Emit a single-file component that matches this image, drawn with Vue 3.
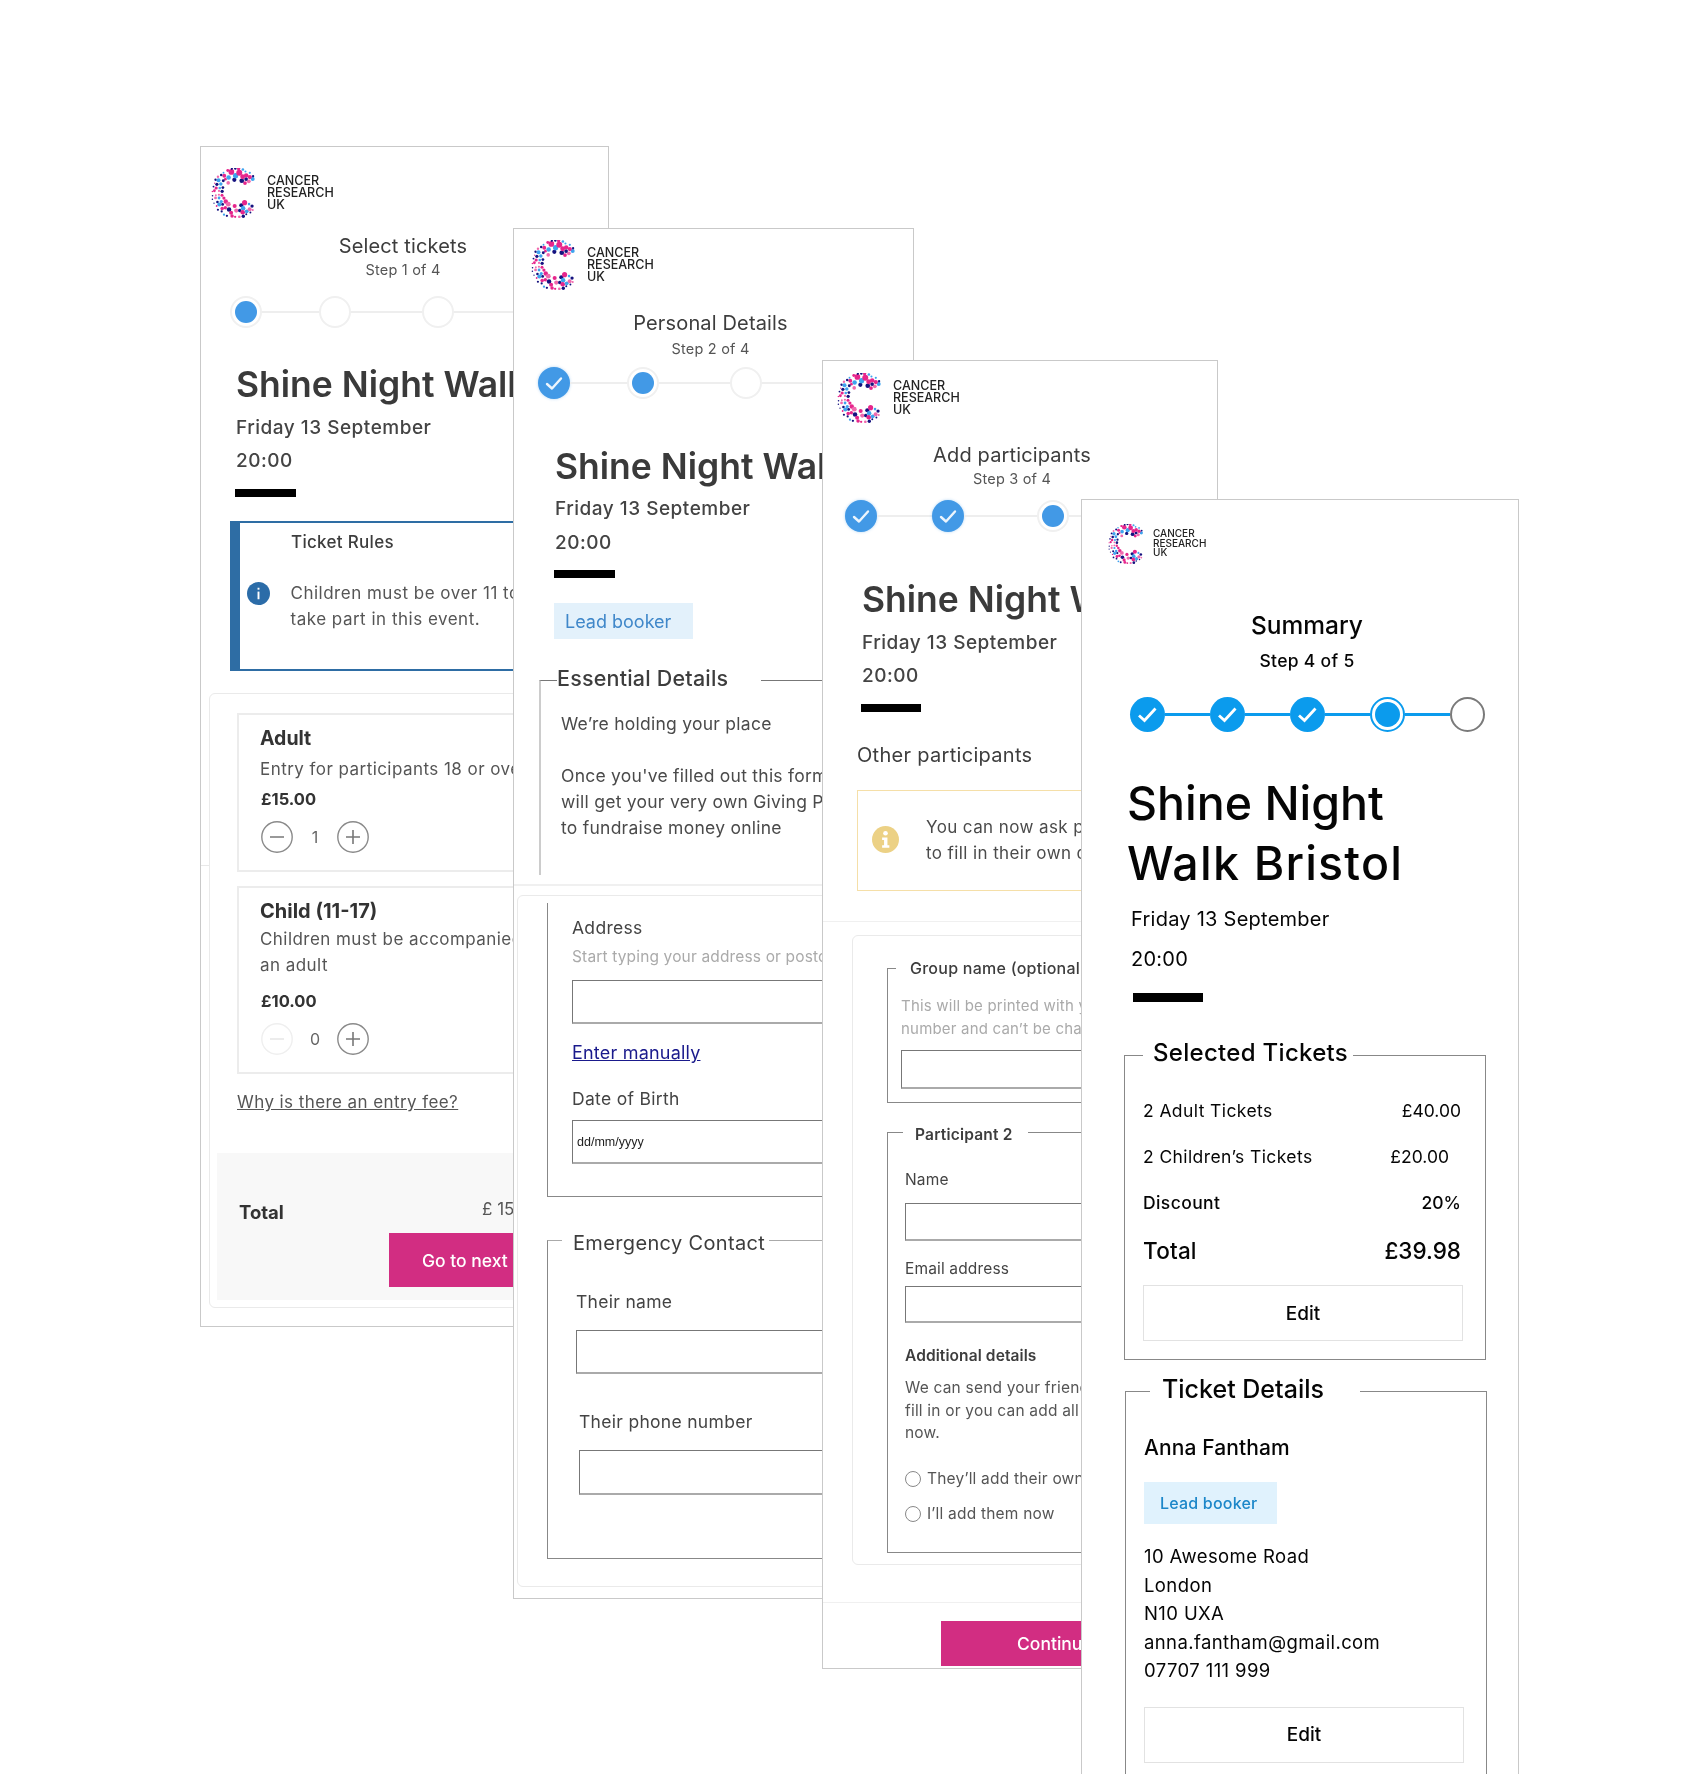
<script setup>
const palette = ['#e6268c', '#15127f', '#3fa3ee', '#f06aae', '#15127f', '#e6268c']
let seed = 11
const rnd = () => (seed = (seed * 16807) % 2147483647) / 2147483647
const dots = []
const rings = [
  { r: 27, n: 18, size: 4.8, from: 50, to: 310 },
  { r: 35, n: 24, size: 4.0, from: 42, to: 318 },
  { r: 42, n: 28, size: 4.6, from: 40, to: 320 },
  { r: 48, n: 30, size: 2.6, from: 46, to: 314 }
]
rings.forEach((ring, ri) => {
  for (let i = 0; i < ring.n; i++) {
    const deg = ring.from + ((ring.to - ring.from) * i) / (ring.n - 1) + (rnd() - 0.5) * 4
    const a = (deg * Math.PI) / 180
    const rr = ring.r + (rnd() - 0.5) * 3
    const sinA = Math.abs(Math.sin(a))
    const size = ring.size * (0.55 + 0.55 * sinA * sinA) * (0.75 + rnd() * 0.5)
    let fill = palette[Math.floor(rnd() * palette.length)]
    if (ri === 0 && rnd() < 0.6) fill = '#15127f'
    if (ri === 2 && sinA > 0.8 && rnd() < 0.6) fill = '#e6268c'
    const x = +(50 + rr * Math.cos(a)).toFixed(1)
    const y = +(50 - rr * Math.sin(a)).toFixed(1)
    const r = +size.toFixed(1)
    // Dots may touch lightly but must not sit on top of each other.
    if (dots.every((d) => Math.hypot(d.x - x, d.y - y) > (d.r + r) * 0.8)) dots.push({ x, y, r, fill })
  }
})
const logoLines = ['CANCER', 'RESEARCH', 'UK']
const addressLines = ['10 Awesome Road', 'London', 'N10 UXA', 'anna.fantham@gmail.com', '07707 111 999']
</script>

<template>
  <div class="canvas">
    <!-- Screen 1 -->
    <section class="screen dim s1">
      <div class="s1-backline"></div>
      <div class="logo s1-logo">
        <svg class="mark" viewBox="0 0 100 100"><circle v-for="(d, i) in dots" :key="i" :cx="d.x" :cy="d.y" :r="d.r" :fill="d.fill" /></svg>
        <div class="wordmark"><span v-for="l in logoLines" :key="l">{{ l }}</span></div>
      </div>
      <div class="head s1-head">
        <h2 class="step-title">Select tickets</h2>
        <p class="step-sub s1-sub">Step 1 of 4</p>
      </div>
      <div class="stepper s1-stepper">
        <span class="node current"><i></i></span><span class="line w57"></span>
        <span class="node"></span><span class="line w71"></span>
        <span class="node"></span><span class="line w120"></span>
      </div>
      <h1 class="title s1-title">Shine Night Walk Bristol</h1>
      <p class="meta s1-date">Friday 13 September</p>
      <p class="meta s1-time">20:00</p>
      <div class="bar s1-bar"></div>
      <div class="rules">
        <p class="rules-head">Ticket Rules</p>
        <div class="rules-row">
          <svg class="info" viewBox="0 0 24 24"><circle cx="12" cy="12" r="12" fill="#2b6ca8" /><rect x="11" y="6" width="2" height="2" fill="#fff" /><rect x="11" y="10" width="2" height="8" fill="#fff" /></svg>
          <p class="rules-text">Children must be over 11 to<br />take part in this event.</p>
        </div>
      </div>
      <div class="card s1-card">
        <div class="ticket adult">
          <h3 class="t-name">Adult</h3>
          <p class="t-desc">Entry for participants 18 or over</p>
          <p class="t-price">£15.00</p>
          <div class="qty">
            <svg class="qbtn" viewBox="0 0 32 32"><circle cx="16" cy="16" r="15.2" /><path d="M9 16h14" /></svg>
            <span class="count">1</span>
            <svg class="qbtn" viewBox="0 0 32 32"><circle cx="16" cy="16" r="15.2" /><path d="M9 16h14M16 9v14" /></svg>
          </div>
        </div>
        <div class="ticket child">
          <h3 class="t-name big">Child (11-17)</h3>
          <p class="t-desc two">Children must be accompanied by<br />an adult</p>
          <p class="t-price p2">£10.00</p>
          <div class="qty">
            <svg class="qbtn off" viewBox="0 0 32 32"><circle cx="16" cy="16" r="15.2" /><path d="M9 16h14" /></svg>
            <span class="count">0</span>
            <svg class="qbtn" viewBox="0 0 32 32"><circle cx="16" cy="16" r="15.2" /><path d="M9 16h14M16 9v14" /></svg>
          </div>
        </div>
        <a class="why">Why is there an entry fee?</a>
        <div class="totals">
          <div class="totals-row"><span class="totals-label">Total</span><span class="totals-price">£ 15.00</span></div>
          <div class="btn-pink s1-btn">Go to next step</div>
        </div>
      </div>
    </section>

    <!-- Screen 2 -->
    <section class="screen dim s2">
      <div class="logo s2-logo">
        <svg class="mark" viewBox="0 0 100 100"><circle v-for="(d, i) in dots" :key="i" :cx="d.x" :cy="d.y" :r="d.r" :fill="d.fill" /></svg>
        <div class="wordmark"><span v-for="l in logoLines" :key="l">{{ l }}</span></div>
      </div>
      <div class="head s2-head">
        <h2 class="step-title">Personal Details</h2>
        <p class="step-sub s2-sub">Step 2 of 4</p>
      </div>
      <div class="stepper s2-stepper">
        <span class="node done"><svg viewBox="0 0 32 32"><path d="M9 17l5 4.5 9-10" /></svg></span><span class="line w57"></span>
        <span class="node current"><i></i></span><span class="line w71"></span>
        <span class="node"></span><span class="line w120"></span>
      </div>
      <h1 class="title s2-title">Shine Night Walk Bristol</h1>
      <p class="meta s2-date">Friday 13 September</p>
      <p class="meta s2-time">20:00</p>
      <div class="bar s2-bar"></div>
      <div class="chip s2-chip">Lead booker</div>
      <fieldset class="fs s2-essential">
        <legend>Essential Details</legend>
        <p class="body first">We’re holding your place</p>
        <p class="body second">Once you've filled out this form you<br />will get your very own Giving Page<br />to fundraise money online</p>
      </fieldset>
      <div class="divider s2-div"></div>
      <div class="card s2-card">
        <div class="s2-address">
          <label class="lab s2-l1">Address</label>
          <p class="hint s2-hint">Start typing your address or postcode</p>
          <div class="input s2-in1"></div>
          <a class="manual">Enter manually</a>
          <label class="lab s2-l2">Date of Birth</label>
          <div class="input s2-in2"><span class="dob">dd/mm/yyyy</span></div>
        </div>
        <fieldset class="fs s2-emergency">
          <legend>Emergency Contact</legend>
          <label class="lab s2-l3">Their name</label>
          <div class="input s2-in3"></div>
          <label class="lab s2-l4">Their phone number</label>
          <div class="input s2-in4"></div>
        </fieldset>
      </div>
    </section>

    <!-- Screen 3 -->
    <section class="screen dim s3">
      <div class="logo s3-logo">
        <svg class="mark" viewBox="0 0 100 100"><circle v-for="(d, i) in dots" :key="i" :cx="d.x" :cy="d.y" :r="d.r" :fill="d.fill" /></svg>
        <div class="wordmark"><span v-for="l in logoLines" :key="l">{{ l }}</span></div>
      </div>
      <div class="head s3-head">
        <h2 class="step-title">Add participants</h2>
        <p class="step-sub s3-sub">Step 3 of 4</p>
      </div>
      <div class="stepper s3-stepper">
        <span class="node done"><svg viewBox="0 0 32 32"><path d="M9 17l5 4.5 9-10" /></svg></span><span class="line w55"></span>
        <span class="node done"><svg viewBox="0 0 32 32"><path d="M9 17l5 4.5 9-10" /></svg></span><span class="line w73"></span>
        <span class="node current"><i></i></span><span class="line w120"></span>
      </div>
      <h1 class="title s3-title">Shine Night Walk Bristol</h1>
      <p class="meta s3-date">Friday 13 September</p>
      <p class="meta s3-time">20:00</p>
      <div class="bar s3-bar"></div>
      <h3 class="others">Other participants</h3>
      <div class="notice">
        <svg class="notice-ico" viewBox="0 0 28 28"><circle cx="14" cy="14" r="14" fill="#ecd185" /><circle cx="14" cy="7.5" r="2.4" fill="#fff" /><path d="M10.5 12h5.5v8h2v2.5h-7.5V20h2v-5.5h-2z" fill="#fff" /></svg>
        <p class="notice-text">You can now ask participants<br />to fill in their own details</p>
      </div>
      <div class="divider s3-div"></div>
      <div class="card s3-card">
        <fieldset class="fs s3-group">
          <legend>Group name (optional)</legend>
          <p class="hint s3-hint">This will be printed with your race<br />number and can’t be changed</p>
          <div class="input s3-in1"></div>
        </fieldset>
        <fieldset class="fs s3-part">
          <legend>Participant 2</legend>
          <label class="lab small s3-l1">Name</label>
          <div class="input s3-in2"></div>
          <label class="lab small s3-l2">Email address</label>
          <div class="input s3-in3"></div>
          <h4 class="add-head">Additional details</h4>
          <p class="add-text">We can send your friend a link to<br />fill in or you can add all their details<br />now.</p>
          <div class="radio r1"><span class="dot"></span>They’ll add their own details</div>
          <div class="radio r2"><span class="dot"></span>I’ll add them now</div>
        </fieldset>
      </div>
      <div class="divider s3-div2"></div>
      <div class="btn-pink s3-btn">Continue</div>
    </section>

    <!-- Screen 4 -->
    <section class="screen s4">
      <div class="logo s4-logo">
        <svg class="mark" viewBox="0 0 100 100"><circle v-for="(d, i) in dots" :key="i" :cx="d.x" :cy="d.y" :r="d.r" :fill="d.fill" /></svg>
        <div class="wordmark"><span v-for="l in logoLines" :key="l">{{ l }}</span></div>
      </div>
      <div class="head s4-head">
        <h2 class="sum-title">Summary</h2>
        <p class="sum-sub">Step 4 of 5</p>
      </div>
      <div class="stepper4">
        <span class="n4 done"><svg viewBox="0 0 35 35"><path d="M9 18.5l5.5 5 11-12" /></svg></span><span class="l4"></span>
        <span class="n4 done"><svg viewBox="0 0 35 35"><path d="M9 18.5l5.5 5 11-12" /></svg></span><span class="l4"></span>
        <span class="n4 done"><svg viewBox="0 0 35 35"><path d="M9 18.5l5.5 5 11-12" /></svg></span><span class="l4"></span>
        <span class="n4 current"><i></i></span><span class="l4"></span>
        <span class="n4 todo"></span>
      </div>
      <h1 class="s4-title">Shine Night<br /><span class="s4-line2">Walk Bristol</span></h1>
      <p class="s4-meta s4-date">Friday 13 September</p>
      <p class="s4-meta s4-time">20:00</p>
      <div class="bar s4-bar"></div>
      <fieldset class="fs4 selected">
        <legend>Selected Tickets</legend>
        <div class="row r-a"><span>2 Adult Tickets</span><span class="price">£40.00</span></div>
        <div class="row r-b"><span>2 Children’s Tickets</span><span class="price">£20.00</span></div>
        <div class="row r-c"><span>Discount</span><span class="price">20%</span></div>
        <div class="row r-d"><span>Total</span><span class="price">£39.98</span></div>
        <div class="edit e1">Edit</div>
      </fieldset>
      <fieldset class="fs4 details">
        <legend>Ticket Details</legend>
        <p class="anna">Anna Fantham</p>
        <div class="chip4">Lead booker</div>
        <div class="addr"><p v-for="l in addressLines" :key="l">{{ l }}</p></div>
        <div class="edit e2">Edit</div>
      </fieldset>
    </section>
  </div>
</template>

<style scoped>
.canvas { position: relative; width: 1686px; height: 1774px; overflow: hidden; background: #fff; font-family: "Inter", "Noto Sans", sans-serif; }
p, h1, h2, h3, h4 { margin: 0; font-weight: inherit; }
.screen { position: absolute; box-sizing: border-box; border: 1px solid #c9c9c9; background: #fff; overflow: hidden; }
.dim { color: #3d3d3d; filter: blur(0.4px); }
.s1 { left: 200px; top: 146px; width: 409px; height: 1181px; }
.s2 { left: 513px; top: 228px; width: 401px; height: 1371px; }
.s3 { left: 822px; top: 360px; width: 396px; height: 1309px; }
.s4 { left: 1081px; top: 499px; width: 438px; height: 1300px; color: #050505; filter: blur(0.25px); }
.s1-backline { position: absolute; left: 0; top: 718px; width: 10px; height: 1px; background: #e8e8e8; }

.logo { display: flex; align-items: center; }
.mark { width: 50px; height: 50px; flex: none; }
.wordmark { display: flex; flex-direction: column; margin-left: 6px; font-size: 12.5px; line-height: 12.2px; font-weight: 500; color: #222; }
.s1-logo { margin: 21px 0 0 10px; }
.s2-logo { margin: 12px 0 0 17px; height: 48px; }
.s3-logo { margin: 12px 0 0 14px; }
.s4-logo { margin: 24px 0 0 26px; height: 39px; }
.s4-logo .mark { width: 40px; height: 40px; }
.s4-logo .wordmark { margin-left: 5px; font-size: 10px; line-height: 9.6px; }

.head { text-align: center; }
.step-title { font-size: 20px; line-height: 24px; font-weight: 400; letter-spacing: 0.15px; }
.step-sub { font-size: 14.5px; line-height: 18px; letter-spacing: 0.2px; color: #555; }
.s1-head { margin-top: 16px; padding-right: 3px; }
.s1-sub { margin-top: 3px; }
.s2-head { margin-top: 22px; padding-right: 6px; }
.s2-sub { margin-top: 5px; }
.s3-head { margin-top: 20px; padding-right: 16px; }
.s3-sub { margin-top: 3px; }

.stepper { display: flex; align-items: center; height: 32px; }
.node { box-sizing: border-box; width: 32px; height: 32px; flex: none; border-radius: 50%; border: 2px solid #f0f0f0; display: flex; align-items: center; justify-content: center; background: #fff; }
.node i { display: block; width: 22px; height: 22px; border-radius: 50%; background: #4299e6; }
.node.done { background: #4299e6; border-color: #4299e6; box-shadow: 0 0 3px rgba(66,153,230,.4); }
.node.done svg { width: 32px; height: 32px; margin: -2px; flex: none; }
.node.done path { fill: none; stroke: #fff; stroke-width: 2.4; stroke-linecap: round; stroke-linejoin: round; opacity: .9; }
.line { height: 2px; background: #eee; flex: none; }
.w55 { width: 55px; } .w57 { width: 57px; } .w71 { width: 71px; } .w73 { width: 73px; } .w120 { width: 120px; }
.s1-stepper { margin: 17px 0 0 29px; }
.s2-stepper { margin: 9px 0 0 24px; }
.s3-stepper { margin: 12px 0 0 22px; }

.title { font-size: 35.5px; line-height: 44px; font-weight: 600; white-space: nowrap; color: #3a3a3a; }
.meta { font-size: 19px; line-height: 26px; font-weight: 500; letter-spacing: 0.5px; color: #444; }
.bar { background: #000; }
.s1-title { margin: 35px 0 0 35px; }
.s1-date { margin: 8px 0 0 35px; }
.s1-time { margin: 7px 0 0 35px; }
.s1-bar { margin: 15px 0 0 34px; width: 61px; height: 8px; }
.s2-title { margin: 46px 0 0 41px; }
.s2-date { margin: 7px 0 0 41px; }
.s2-time { margin: 8px 0 0 41px; }
.s2-bar { margin: 14px 0 0 40px; width: 61px; height: 8px; }
.s3-title { margin: 46px 0 0 39px; }
.s3-date { margin: 8px 0 0 39px; }
.s3-time { margin: 7px 0 0 39px; }
.s3-bar { margin: 15px 0 0 38px; width: 60px; height: 8px; }

.rules { box-sizing: border-box; margin: 24px 0 0 29px; width: 500px; height: 150px; border: 2px solid #2e6da4; border-left-width: 10px; }
.rules-head { margin: 8px 0 0 51px; font-size: 17px; line-height: 22px; font-weight: 500; letter-spacing: 0.3px; }
.rules-row { display: flex; margin-top: 27px; }
.info { flex: none; width: 23px; height: 23px; margin: 1.5px 0 0 6.5px; }
.rules-text { margin-left: 21px; font-size: 17px; line-height: 26px; letter-spacing: 0.5px; white-space: nowrap; color: #555; }

.card { box-sizing: border-box; border: 1px solid #eaeaea; border-radius: 6px; overflow: hidden; }
.s1-card { position: relative; background: #fff; margin: 22px 0 0 8px; width: 500px; height: 615px; padding-top: 19px; }
.ticket { box-sizing: border-box; width: 400px; margin-left: 27px; border: 2px solid #ececec; padding-left: 21px; }
.adult { height: 159px; padding-top: 11px; }
.child { height: 188px; margin-top: 14px; padding-top: 10px; }
.t-name { font-size: 19.5px; line-height: 24px; font-weight: 700; color: #333; }
.t-name.big { font-size: 20px; line-height: 26px; }
.t-desc { margin-top: 7px; font-size: 17px; line-height: 24px; letter-spacing: 0.45px; white-space: nowrap; color: #555; }
.t-desc.two { margin-top: 2px; line-height: 26px; }
.t-price { margin: 7px 0 0 1px; font-size: 16.5px; line-height: 22px; font-weight: 700; color: #333; }
.t-price.p2 { margin-top: 12px; }
.qty { display: flex; align-items: center; margin: 11px 0 0 1px; }
.qbtn { width: 32px; height: 32px; flex: none; }
.qbtn circle { fill: #fff; stroke: #8a8a8a; stroke-width: 1.4; }
.qbtn path { stroke: #777; stroke-width: 1.6; fill: none; }
.qbtn.off circle { stroke: #efefef; }
.qbtn.off path { stroke: #e6e6e6; }
.count { width: 44px; text-align: center; font-size: 16px; color: #666; }
.why { display: block; margin: 16px 0 0 27px; font-size: 17px; line-height: 24px; letter-spacing: 0.42px; color: #555; text-decoration: underline; }
.totals { margin: 39px 0 0 7px; height: 147px; background: #f8f8f8; padding-top: 47px; box-sizing: border-box; }
.totals-row { display: flex; align-items: flex-start; padding-left: 22px; line-height: 24px; font-size: 18.5px; }
.totals-label { width: 243px; font-weight: 700; color: #333; }
.totals-price { margin-top: -3px; font-size: 17px; color: #555; }
.btn-pink { box-sizing: border-box; background: #d22d82; color: #fff; white-space: nowrap; display: flex; align-items: center; font-weight: 500; }
.s1-btn { margin: 9px 0 0 172px; width: 250px; height: 54px; padding-left: 33px; font-size: 17.5px; }

.chip { box-sizing: border-box; display: flex; align-items: center; }
.s2-chip { margin: 25px 0 0 40px; width: 139px; height: 36px; padding-left: 11px; background: #e3f1fb; color: #3f87c9; font-size: 18px; }
.fs { min-width: 0; margin: 0; padding: 0; border: 0; box-sizing: border-box; }
.fs legend { padding: 0; box-sizing: border-box; white-space: nowrap; }
.s2-essential { margin: 27px 0 0 25px; width: 400px; height: 209px; border-top: 1px solid #777; border-left: 2px solid #ccc; }
.s2-essential legend { margin-left: 16px; width: 204px; line-height: 24px; padding-bottom: 4px; font-size: 21.5px; font-weight: 500; letter-spacing: 0.2px; }
.body { padding-left: 20px; font-size: 17.5px; line-height: 26px; letter-spacing: 0.25px; white-space: nowrap; color: #4a4a4a; }
.first { padding-top: 17px; }
.second { margin-top: 26px; }
.divider { height: 2px; background: #f0f0f0; }
.s2-div { margin-top: 9px; }
.s2-card { margin: 9px 0 0 3px; width: 420px; height: 692px; padding-top: 7px; }
.s2-address { box-sizing: border-box; margin-left: 29px; width: 400px; height: 294px; border-left: 1px solid #888; border-bottom: 1px solid #888; padding: 13px 0 0 24px; }
.lab { display: block; font-size: 17.5px; line-height: 24px; letter-spacing: 0.3px; color: #444; white-space: nowrap; }
.hint { font-size: 15.5px; line-height: 22px; letter-spacing: 0.15px; color: #aaa; white-space: nowrap; }
.input { box-sizing: border-box; background: #fff; border: 1px solid #777; border-left-width: 1px; border-bottom: 2px solid #aaa; }
.s2-hint { margin-top: 6px; }
.s2-in1 { margin-top: 12px; width: 400px; height: 44px; }
.manual { display: block; margin-top: 17px; font-size: 18px; line-height: 24px; letter-spacing: 0.2px; color: #1a1a8c; text-decoration: underline; }
.s2-l2 { margin-top: 22px; }
.s2-in2 { margin-top: 9px; width: 400px; height: 44px; display: flex; align-items: center; padding-left: 4px; }
.dob { font-family: "Liberation Sans", sans-serif; font-size: 12.5px; color: #222; }
.s2-emergency { margin: 29px 0 0 29px; width: 400px; height: 333px; border-left: 1px solid #888; border-bottom: 1px solid #888; border-top: 1px solid #aaa; }
.s2-emergency legend { margin-left: 14px; width: 207px; padding: 6px 0 0 11px; line-height: 22px; font-size: 20px; letter-spacing: 0.35px; }
.s2-l3 { margin: 36px 0 0 28px; }
.s2-in3 { margin: 16px 0 0 28px; width: 400px; height: 44px; }
.s2-l4 { margin: 36px 0 0 31px; }
.s2-in4 { margin: 16px 0 0 31px; width: 400px; height: 45px; }

.others { margin: 30px 0 0 34px; font-size: 20px; line-height: 26px; letter-spacing: 0.3px; }
.notice { box-sizing: border-box; display: flex; align-items: center; margin: 22px 0 0 34px; width: 420px; height: 101px; border: 1.5px solid #f5dfa8; padding-left: 14px; }
.notice-ico { width: 27px; height: 27px; flex: none; margin-top: -2px; }
.notice-text { margin: -1px 0 0 27px; font-size: 17px; line-height: 26px; letter-spacing: 0.4px; white-space: nowrap; color: #4a4a4a; }
.s3-div { margin-top: 30px; height: 1px; }
.s3-card { margin: 13px 0 0 29px; width: 420px; height: 630px; padding-top: 21px; }
.s3-group { margin-left: 34px; width: 400px; height: 146px; border-top: 1px solid #888; border-left: 1px solid #888; border-bottom: 1px solid #888; }
.s3-group legend { margin-left: 8px; padding-left: 14px; width: 210px; line-height: 22px; font-size: 16px; font-weight: 500; letter-spacing: 0.25px; }
.s3-hint { padding: 15px 0 0 13px; font-size: 15px; line-height: 23px; letter-spacing: 0.2px; }
.s3-in1 { margin: 10px 0 0 13px; width: 400px; height: 39px; }
.s3-part { margin: 15px 0 0 34px; width: 400px; height: 435px; border-top: 1px solid #888; border-left: 1px solid #888; border-bottom: 1px solid #888; }
.s3-part legend { margin-left: 15px; padding: 6px 0 0 12px; width: 125px; line-height: 22px; font-size: 15.5px; font-weight: 600; letter-spacing: 0.2px; }
.lab.small { font-size: 15.5px; line-height: 20px; letter-spacing: 0.15px; margin-left: 17px; }
.s3-l1 { margin-top: 24px; }
.s3-in2 { margin: 13px 0 0 17px; width: 400px; height: 38px; }
.s3-l2 { margin-top: 18px; }
.s3-in3 { margin: 7px 0 0 17px; width: 400px; height: 37px; }
.add-head { margin: 23px 0 0 17px; font-size: 15.5px; line-height: 20px; font-weight: 600; letter-spacing: 0.1px; }
.add-text { margin: 11px 0 0 17px; font-size: 15.5px; line-height: 22.5px; letter-spacing: 0.2px; white-space: nowrap; color: #555; }
.radio { display: flex; align-items: center; height: 20px; margin-left: 17px; font-size: 15.5px; letter-spacing: 0.2px; white-space: nowrap; color: #555; }
.r1 { margin-top: 24px; }
.r2 { margin-top: 15px; }
.dot { box-sizing: border-box; width: 16px; height: 16px; border: 1px solid #888; border-radius: 50%; margin-right: 6px; flex: none; }
.s3-div2 { margin-top: 37px; height: 1px; }
.s3-btn { margin: 18px 0 0 118px; width: 300px; height: 45px; padding-left: 76px; font-size: 17.5px; }

.s4-head { margin-top: 47px; padding-left: 14px; }
.sum-title { font-size: 24.5px; line-height: 30px; font-weight: 500; }
.sum-sub { margin-top: 9px; font-size: 17.5px; line-height: 24px; font-weight: 500; letter-spacing: 0.3px; }
.stepper4 { display: flex; align-items: center; height: 35px; margin: 24px 0 0 47.5px; }
.n4 { box-sizing: border-box; width: 35px; height: 35px; flex: none; border-radius: 50%; display: flex; align-items: center; justify-content: center; }
.n4.done { background: #0b9bed; }
.n4.done svg { width: 35px; height: 35px; }
.n4.done path { fill: none; stroke: #fff; stroke-width: 2.8; stroke-linejoin: miter; }
.n4.current { border: 2px solid #0b9bed; }
.n4.current i { display: block; width: 25px; height: 25px; border-radius: 50%; background: #0b9bed; }
.n4.todo { border: 2px solid #7a7a7a; }
.l4 { width: 45px; height: 3px; background: #0b9bed; flex: none; }
.s4-title { margin: 41px 0 0 45px; font-size: 46.5px; line-height: 60px; font-weight: 500; white-space: nowrap; }
.s4-line2 { letter-spacing: 1.2px; }
.s4-meta { margin-left: 49px; font-size: 20px; line-height: 28px; letter-spacing: 0.25px; }
.s4-date { margin-top: 12px; }
.s4-time { margin-top: 12px; }
.s4-bar { margin: 20px 0 0 51px; width: 70px; height: 9px; }
.fs4 { min-width: 0; box-sizing: border-box; margin: 0; padding: 0; border: 1.5px solid #888; }
.fs4 legend { padding: 0; box-sizing: border-box; white-space: nowrap; font-weight: 500; letter-spacing: 0.3px; }
.selected { margin: 37px 0 0 42px; width: 362px; height: 321px; }
.selected legend { margin-left: 18px; padding: 0 0 4px 10px; width: 210px; line-height: 28px; font-size: 24px; }
.row { display: flex; justify-content: space-between; margin: 22px 24px 0 18px; font-size: 17.5px; line-height: 24px; letter-spacing: 0.4px; }
.price { letter-spacing: 0; }
.r-a { margin-top: 28px; }
.r-b { margin-right: 36px; }
.r-c { font-weight: 500; }
.r-d { margin-top: 21px; font-size: 22.5px; line-height: 30px; font-weight: 500; letter-spacing: 0.2px; }
.edit { box-sizing: border-box; width: 320px; height: 56px; display: flex; align-items: center; justify-content: center; border: 1.5px solid #e2e2e2; font-size: 19px; font-weight: 500; }
.e1 { margin: 19px 0 0 18px; }
.details { margin: 15px 0 0 43px; width: 362px; height: 500px; }
.details legend { margin-left: 24px; padding: 0 0 4px 12px; width: 210px; line-height: 28px; font-size: 25px; letter-spacing: 0; }
.anna { margin: 27px 0 0 18px; font-size: 21px; line-height: 28px; font-weight: 500; letter-spacing: 0.1px; }
.chip4 { box-sizing: border-box; display: flex; align-items: center; margin: 20px 0 0 18px; width: 133px; height: 42px; padding-left: 16px; background: #e0f2fd; color: #1c87c9; font-size: 16px; font-weight: 500; letter-spacing: 0.2px; }
.addr { margin: 18px 0 0 18px; font-size: 18.5px; line-height: 28.5px; letter-spacing: 0.4px; }
.e2 { margin: 22px 0 0 18px; }
</style>
